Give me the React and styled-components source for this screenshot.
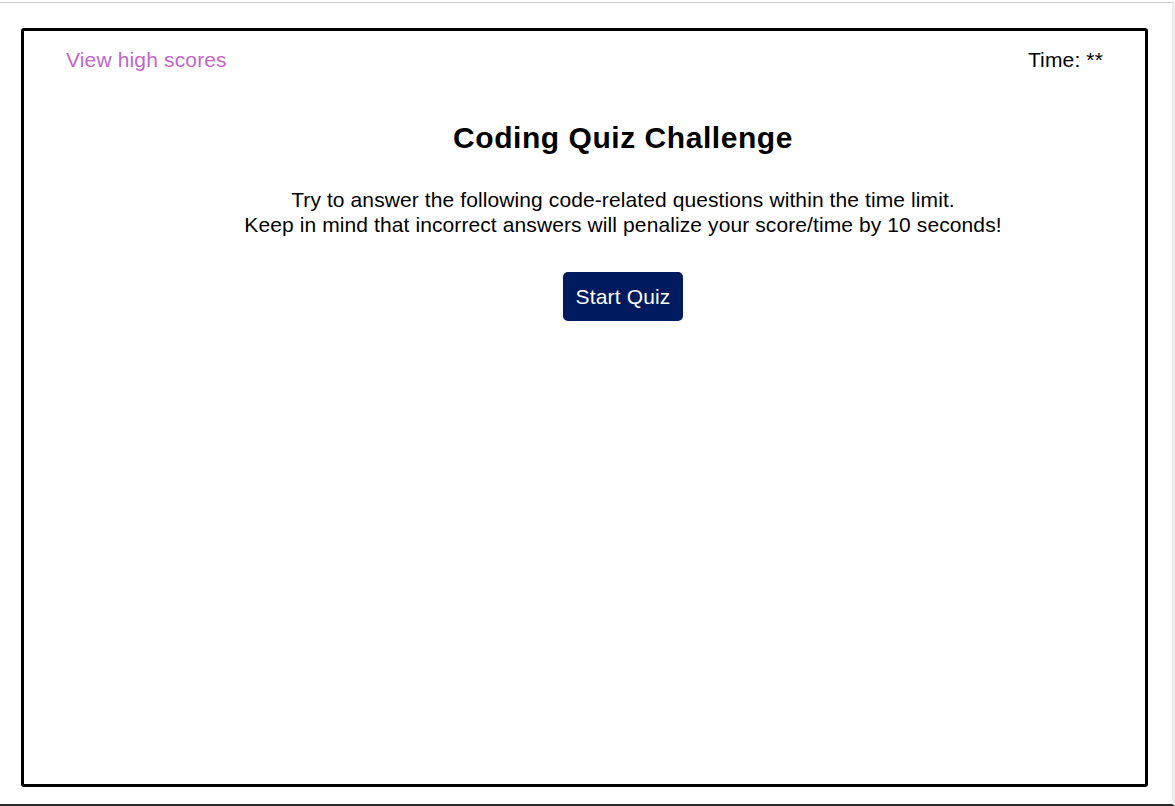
import React from 'react';
import styled, { createGlobalStyle } from 'styled-components';

const GlobalStyle = createGlobalStyle`
  html, body {
    margin: 0;
    padding: 0;
    background: #ffffff;
    font-family: "Liberation Sans", Arial, sans-serif;
  }
`;

const Page = styled.div`
  box-sizing: border-box;
  height: 804px;
  margin-top: 2px;
  border-top: 1px solid #cfcfcf;
  border-right: 3px solid #efefef;
  border-bottom: 2px solid #2a2a2a;
  padding: 25px 24px 17px 21px;
  display: flex;
`;

const Frame = styled.div`
  box-sizing: border-box;
  flex: 1;
  border: 3px solid #000;
  border-radius: 3px;
  padding: 16px 42px 0 42px;
  display: flex;
  flex-direction: column;
`;

const Header = styled.header`
  display: flex;
  justify-content: space-between;
  align-items: center;
  font-size: 21px;
  line-height: 26px;
  letter-spacing: 0.15px;
`;

const HighScores = styled.a`
  color: #c266c8;
  text-decoration: none;
  cursor: pointer;
`;

const Timer = styled.span`
  color: #000;
`;

const Main = styled.main`
  display: flex;
  flex-direction: column;
  align-items: center;
  padding-left: 77px;
  text-align: center;
`;

const Title = styled.h1`
  margin: 48px 0 0;
  font-size: 30px;
  line-height: 34px;
  letter-spacing: 0.55px;
  font-weight: bold;
  color: #000;
`;

const Intro = styled.p`
  margin: 32px 0 0;
  font-size: 21px;
  line-height: 25px;
  letter-spacing: 0.1px;
  color: #000;
`;

const StartButton = styled.button`
  margin-top: 35px;
  width: 120px;
  height: 49px;
  border: none;
  border-radius: 5px;
  background: #001a60;
  color: #fff;
  font-family: "Liberation Sans", Arial, sans-serif;
  font-size: 21px;
  letter-spacing: 0.15px;
  cursor: pointer;
`;

export default function App() {
  return (
    <>
      <GlobalStyle />
      <Page>
        <Frame>
          <Header>
            <HighScores>View high scores</HighScores>
            <Timer>Time: **</Timer>
          </Header>
          <Main>
            <Title>Coding Quiz Challenge</Title>
            <Intro>
              Try to answer the following code-related questions within the time limit.
              <br />
              Keep in mind that incorrect answers will penalize your score/time by 10 seconds!
            </Intro>
            <StartButton>Start Quiz</StartButton>
          </Main>
        </Frame>
      </Page>
    </>
  );
}
